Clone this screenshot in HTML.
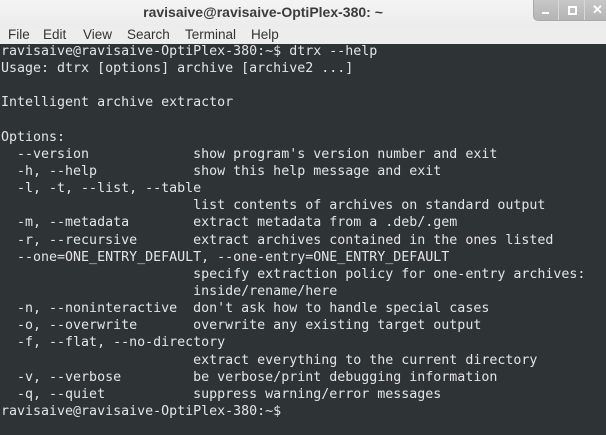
<!DOCTYPE html>
<html><head><style>
body{margin:0;width:606px;height:435px;overflow:hidden;background:#2e3436;font-family:"Liberation Sans",sans-serif;}
#title{position:absolute;left:0;top:0;width:526px;height:26px;text-align:center;font-weight:bold;font-size:14px;line-height:24px;color:#3c3c3c;}
#tbg{position:absolute;left:0;top:0;width:606px;height:26px;background:linear-gradient(#f4f4f4,#ececec);}
#btns{position:absolute;left:533px;top:0;width:80px;height:20px;background:linear-gradient(#c8c8c8,#b4b4b4);border-radius:0 0 0 5px;border:1px solid #aaa;border-top:none;}
#btns span{position:absolute;top:0;width:1px;height:20px;background:#d8d8d8;}
#menu{position:absolute;left:0;top:26px;width:606px;height:18px;background:#ededed;font-size:13.5px;color:#333;line-height:16px;}
#menu span{position:absolute;top:1px;}
#term{position:absolute;left:1px;top:43px;margin:0;white-space:pre;font-family:"DejaVu Sans Mono","Liberation Mono",monospace;font-size:13.3px;line-height:17.14px;color:#e4e4e4;}
</style></head><body>
<div id="tbg"></div>
<div id="title">ravisaive@ravisaive-OptiPlex-380: ~</div>
<div id="btns"><span style="left:24px"></span><span style="left:50px"></span>
<div style="position:absolute;left:8px;top:12px;width:7px;height:2px;background:#fff"></div>
<div style="position:absolute;left:34px;top:6px;width:5px;height:5px;border:2px solid #fff"></div>
<div style="position:absolute;left:58px;top:2px;color:#fff;font-weight:bold;font-size:13px">✕</div>
</div>
<div id="menu"><span style="left:8px">File</span><span style="left:43px">Edit</span><span style="left:83px">View</span><span style="left:127px">Search</span><span style="left:185px">Terminal</span><span style="left:251px">Help</span></div>
<div id="term">ravisaive@ravisaive-OptiPlex-380:~$ dtrx --help
Usage: dtrx [options] archive [archive2 ...]

Intelligent archive extractor

Options:
  --version             show program's version number and exit
  -h, --help            show this help message and exit
  -l, -t, --list, --table
                        list contents of archives on standard output
  -m, --metadata        extract metadata from a .deb/.gem
  -r, --recursive       extract archives contained in the ones listed
  --one=ONE_ENTRY_DEFAULT, --one-entry=ONE_ENTRY_DEFAULT
                        specify extraction policy for one-entry archives:
                        inside/rename/here
  -n, --noninteractive  don't ask how to handle special cases
  -o, --overwrite       overwrite any existing target output
  -f, --flat, --no-directory
                        extract everything to the current directory
  -v, --verbose         be verbose/print debugging information
  -q, --quiet           suppress warning/error messages
ravisaive@ravisaive-OptiPlex-380:~$</div>
</body></html>
